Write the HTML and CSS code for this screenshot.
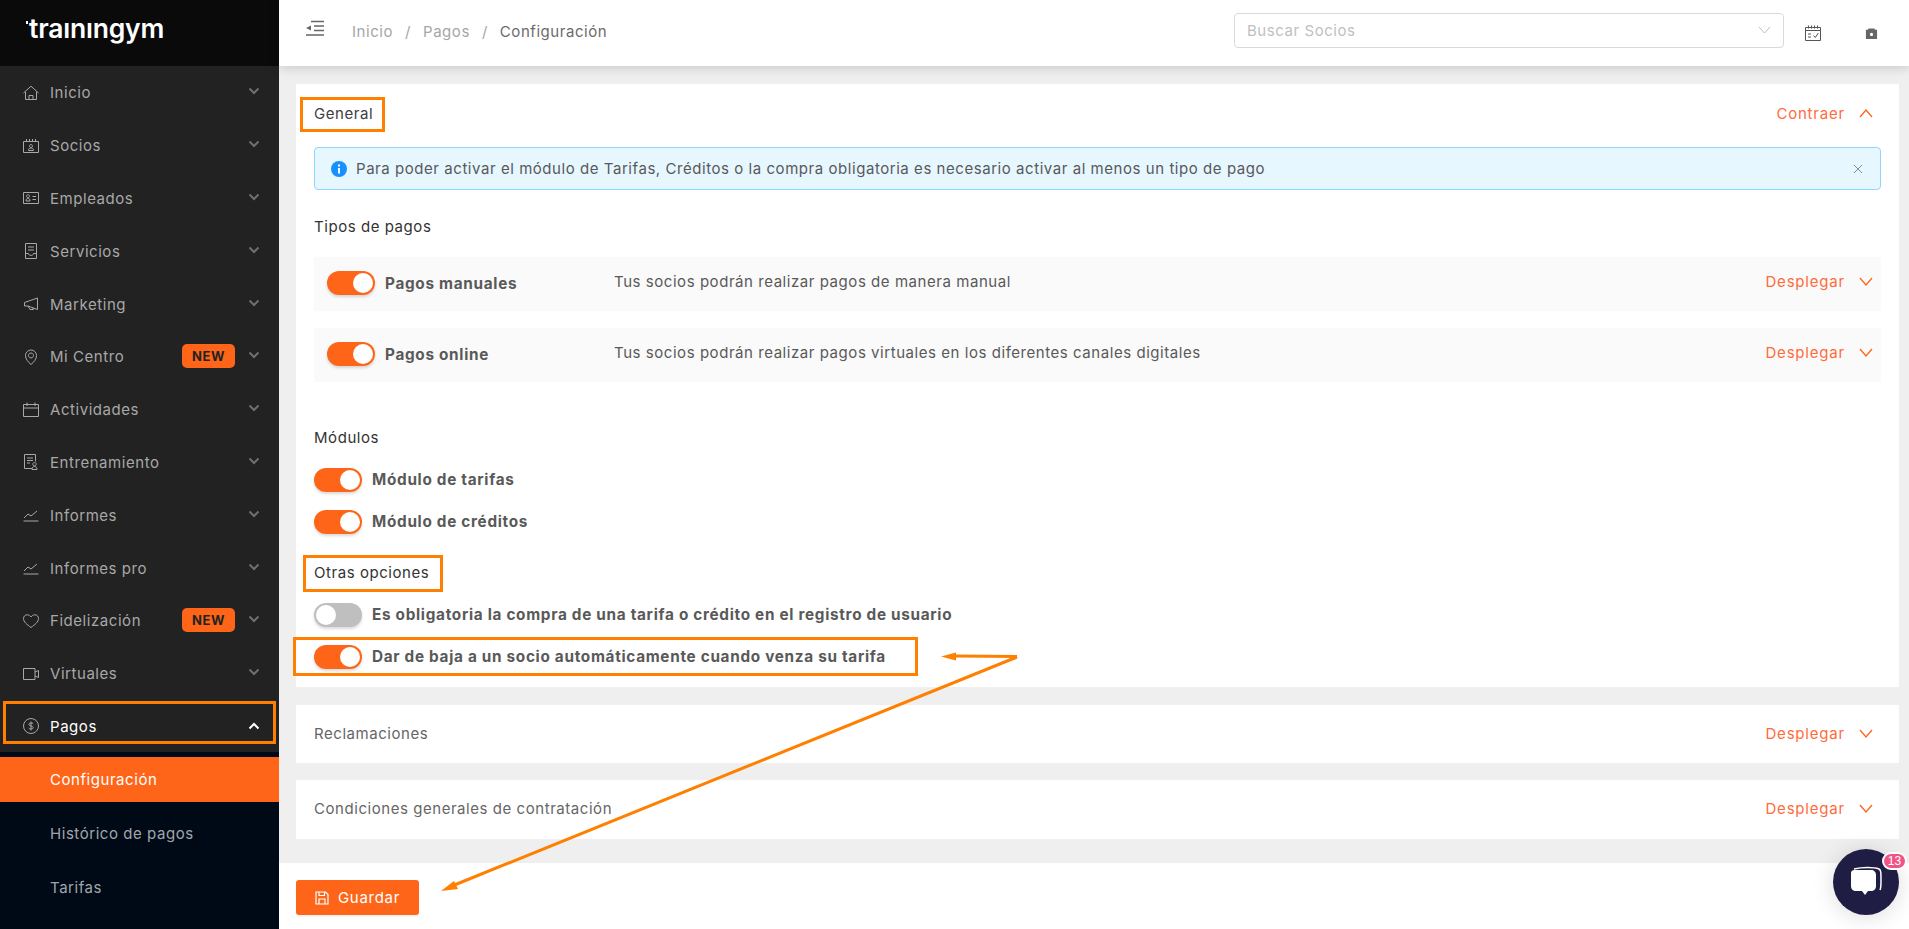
FILE: index.html
```html
<!DOCTYPE html>
<html lang="es">
<head>
<meta charset="utf-8">
<title>Configuración de pagos</title>
<link rel="stylesheet" href="styles.css">
</head>
<body>
<div class="app">
  <aside class="sidebar">
    <div class="logo"><span class="logo-dot"></span><span class="logo-text">traınıngym</span></div>
    <nav class="nav">
      <a class="nav-item"><svg class="ico" viewBox="0 0 16 16"><path d="M.5 8 8 1.2 15.5 8M2.5 7v7.5h11V7M6 14.500V10.500h4v4"/></svg><span class="nav-label">Inicio</span><svg class="chev" viewBox="0 0 12 8"><path d="M1.500 1.500 6 6l4.500-4.500"/></svg></a>
      <a class="nav-item"><svg class="ico" viewBox="0 0 16 16"><path d="M.5 3.500h15v11H.5zM3.500 1v3M6.500 1v3M9.500 1v3M12.500 1v3M5.500 12.500c0-2 1-2.500 2.500-2.500s2.500.5 2.500 2.500zM8 6.500a1.500 1.500 0 1 0 .01 0"/></svg><span class="nav-label">Socios</span><svg class="chev" viewBox="0 0 12 8"><path d="M1.500 1.500 6 6l4.500-4.500"/></svg></a>
      <a class="nav-item"><svg class="ico" viewBox="0 0 16 16"><path d="M.5 2.500h15v11H.5zM3 11c0-2 .8-2.500 2-2.500S7 9 7 11zM5 4.700a1.500 1.500 0 1 0 .01 0M9.500 6.500h3.500M9.500 9.500h3.500"/></svg><span class="nav-label">Empleados</span><svg class="chev" viewBox="0 0 12 8"><path d="M1.500 1.500 6 6l4.500-4.500"/></svg></a>
      <a class="nav-item"><svg class="ico" viewBox="0 0 16 16"><path d="M2.500.5h11v15h-11zM5 4h6M5 7h6M2.500 10.500h3c0 2.500 5 2.500 5 0h3"/></svg><span class="nav-label">Servicios</span><svg class="chev" viewBox="0 0 12 8"><path d="M1.500 1.500 6 6l4.500-4.500"/></svg></a>
      <a class="nav-item"><svg class="ico" viewBox="0 0 16 16"><path d="M14.500 2v11.500L5 10H1.500V6.500zM5 10l2 3.500h3.500L9.500 11.500"/></svg><span class="nav-label">Marketing</span><svg class="chev" viewBox="0 0 12 8"><path d="M1.500 1.500 6 6l4.500-4.500"/></svg></a>
      <a class="nav-item"><svg class="ico" viewBox="0 0 16 16"><path d="M8 15.500C5 13 2.500 10 2.500 6.500a5.500 5.500 0 0 1 11 0C13.500 10 11 13 8 15.500zM8 4a2.500 2.500 0 1 0 .01 0"/></svg><span class="nav-label">Mi Centro</span><span class="badge">NEW</span><svg class="chev" viewBox="0 0 12 8"><path d="M1.500 1.500 6 6l4.500-4.500"/></svg></a>
      <a class="nav-item"><svg class="ico" viewBox="0 0 16 16"><path d="M.5 2.500h15v12H.5zM.5 6h15M4 .5v3.500M12 .5v3.500"/></svg><span class="nav-label">Actividades</span><svg class="chev" viewBox="0 0 12 8"><path d="M1.500 1.500 6 6l4.500-4.500"/></svg></a>
      <a class="nav-item"><svg class="ico" viewBox="0 0 16 16"><path d="M9 14.500H1.500V.5h11v7M4 4h6M4 6.500h6M4 9h3M9 15.500c0-2 1-3 2.500-3s2.500 1 2.500 3zM11.500 8.500a1.700 1.700 0 1 0 .01 0"/></svg><span class="nav-label">Entrenamiento</span><svg class="chev" viewBox="0 0 12 8"><path d="M1.500 1.500 6 6l4.500-4.500"/></svg></a>
      <a class="nav-item"><svg class="ico" viewBox="0 0 16 16"><path d="M.5 14h15M1 11l4-4 3 2 6-5"/></svg><span class="nav-label">Informes</span><svg class="chev" viewBox="0 0 12 8"><path d="M1.500 1.500 6 6l4.500-4.500"/></svg></a>
      <a class="nav-item"><svg class="ico" viewBox="0 0 16 16"><path d="M.5 14h15M1 11l4-4 3 2 6-5"/></svg><span class="nav-label">Informes pro</span><svg class="chev" viewBox="0 0 12 8"><path d="M1.500 1.500 6 6l4.500-4.500"/></svg></a>
      <a class="nav-item"><svg class="ico" viewBox="0 0 16 16"><path d="M8 14.500C4 11.500.5 9 .5 5.500 .5 3.300 2.200 1.800 4.200 1.800 5.800 1.800 7.200 2.700 8 4c.8-1.300 2.200-2.200 3.800-2.200 2 0 3.700 1.500 3.700 3.700C15.500 9 12 11.500 8 14.500z"/></svg><span class="nav-label">Fidelización</span><span class="badge">NEW</span><svg class="chev" viewBox="0 0 12 8"><path d="M1.500 1.500 6 6l4.500-4.500"/></svg></a>
      <a class="nav-item"><svg class="ico" viewBox="0 0 16 16"><path d="M.5 2.500h11.500v11H.5zM12 6l3.500-1.500v7L12 10"/></svg><span class="nav-label">Virtuales</span><svg class="chev" viewBox="0 0 12 8"><path d="M1.500 1.500 6 6l4.500-4.500"/></svg></a>
      <a class="nav-item active"><svg class="ico" viewBox="0 0 16 16"><circle cx="8" cy="8" r="7.500"/><path d="M10.300 5.800C9.700 4.600 6 4.500 5.800 6.300 5.600 8.200 10.400 7.700 10.300 9.700 10.100 11.400 6.400 11.400 5.700 10M8 3.500v9"/></svg><span class="nav-label">Pagos</span><svg class="chev up" viewBox="0 0 12 8"><path d="M1.500 6.500 6 2l4.500 4.500"/></svg></a>
    </nav>
    <div class="subnav">
      <a class="sub-item current">Configuración</a>
      <a class="sub-item">Histórico de pagos</a>
      <a class="sub-item">Tarifas</a>
    </div>
  </aside>

  <main class="main">
    <header class="topbar">
      <svg class="menu-ico" viewBox="0 0 18 16"><path d="M5 1.500h13M8 6h10M8 10.500h10M0 15h18"/><path class="fill" d="M5 5.500v5L0 8z"/></svg>
      <ol class="crumbs">
        <li>Inicio</li><li class="sep">/</li><li>Pagos</li><li class="sep">/</li><li class="here">Configuración</li>
      </ol>
      <div class="search"><span>Buscar Socios</span><svg class="search-chev" viewBox="0 0 13 8"><path d="M1 1l5.500 6L12 1"/></svg></div>
      <svg class="top-ico" viewBox="0 0 16 16"><path d="M.5 2.500h15v13H.5zM.5 5.500h15M3.500.5v3M6.500.5v3M9.500.5v3M12.500.5v3M3 9h3M3 12h3M8.500 10.500l1.800 2 3-4.500"/></svg>
      <svg class="top-ico cam" viewBox="0 0 14 14"><path class="fill" d="M4 1.500h6l1 1.500h2v10H1V3h2z"/><circle class="hole" cx="7" cy="8" r="2.500"/></svg>
    </header>

    <div class="content">
      <section class="card">
        <div class="card-head">
          <span class="card-title">General</span>
          <span class="fold">Contraer<svg class="fold-ico" viewBox="0 0 14 9"><path d="M1 8 7 1l6 7"/></svg></span>
        </div>
        <div class="alert">
          <svg class="info" viewBox="0 0 16 16"><circle cx="8" cy="8" r="8"/><rect x="7" y="7" width="2" height="5.500"/><rect x="7" y="3.500" width="2" height="2"/></svg>
          <span class="alert-text">Para poder activar el módulo de Tarifas, Créditos o la compra obligatoria es necesario activar al menos un tipo de pago</span>
          <svg class="close" viewBox="0 0 10 10"><path d="M1 1l8 8M9 1 1 9"/></svg>
        </div>
        <h3 class="section first">Tipos de pagos</h3>
        <div class="pay-row">
          <span class="toggle on"></span>
          <strong class="pay-name">Pagos manuales</strong>
          <span class="pay-desc">Tus socios podrán realizar pagos de manera manual</span>
          <span class="fold">Desplegar<svg class="fold-ico" viewBox="0 0 14 9"><path d="M1 1l6 7 6-7"/></svg></span>
        </div>
        <div class="pay-row second">
          <span class="toggle on"></span>
          <strong class="pay-name">Pagos online</strong>
          <span class="pay-desc">Tus socios podrán realizar pagos virtuales en los diferentes canales digitales</span>
          <span class="fold">Desplegar<svg class="fold-ico" viewBox="0 0 14 9"><path d="M1 1l6 7 6-7"/></svg></span>
        </div>
        <h3 class="section modules">Módulos</h3>
        <div class="opt"><span class="toggle on"></span><strong class="opt-label">Módulo de tarifas</strong></div>
        <div class="opt"><span class="toggle on"></span><strong class="opt-label">Módulo de créditos</strong></div>
        <h3 class="section others">Otras opciones</h3>
        <div class="opt"><span class="toggle"></span><strong class="opt-label">Es obligatoria la compra de una tarifa o crédito en el registro de usuario</strong></div>
        <div class="opt"><span class="toggle on"></span><strong class="opt-label">Dar de baja a un socio automáticamente cuando venza su tarifa</strong></div>
      </section>
      <section class="card closed h58">
        <span class="card-title muted">Reclamaciones</span>
        <span class="fold">Desplegar<svg class="fold-ico" viewBox="0 0 14 9"><path d="M1 1l6 7 6-7"/></svg></span>
      </section>
      <section class="card closed h59">
        <span class="card-title muted">Condiciones generales de contratación</span>
        <span class="fold">Desplegar<svg class="fold-ico" viewBox="0 0 14 9"><path d="M1 1l6 7 6-7"/></svg></span>
      </section>
    </div>

    <footer class="footer">
      <button class="save"><svg class="save-ico" viewBox="0 0 14 14"><path d="M1 1h9.500L13 3.500V13H1zM4 1v3.500h5.500V1M4 13V8h6v5"/></svg>Guardar</button>
    </footer>
  </main>
</div>

<svg class="marks" viewBox="0 0 1909 929">
  <rect x="301.500" y="98.500" width="82" height="32"/>
  <rect x="304.500" y="556.500" width="137" height="34"/>
  <rect x="294.500" y="638.500" width="622" height="36"/>
  <rect x="4.500" y="702.500" width="270" height="40"/>
  <path d="M1017 656.500 955 656"/>
  <path d="M1017 657 452 886"/>
  <path class="head" d="M941 656.500l15-4v8z"/>
  <path class="head" d="M441 891l13-10 4 8z"/>
</svg>

<div class="chat">
  <svg class="chat-ico" viewBox="0 0 36 32"><path class="back" d="M6 3c8-2 20-2 25 0 2 1 2 3 2 12 0 4 0 7-1 9"/><path class="bubble" d="M3 8c0-3 1-4 4-4h16c3 0 5 2 5 5v11c0 3-2 5-5 5h-3l-3 4-3-4H8c-3 0-5-2-5-5z"/></svg>
  <span class="chat-badge">13</span>
</div>
</body>
</html>
```

FILE: styles.css
```css
* { box-sizing: border-box; }
html, body { margin: 0; padding: 0; height: 100%; overflow: hidden; }
body { font-family: Inter, "Liberation Sans", sans-serif; font-size: 15px; letter-spacing: .55px; color: #595959; background: #fff; }
h3, ol { margin: 0; padding: 0; font-size: inherit; font-weight: 400; }
li { list-style: none; }

.app { display: flex; height: 929px; }

/* sidebar */
.sidebar { width: 279px; flex: none; display: flex; flex-direction: column; background: #000a16; }
.logo { height: 66px; flex: none; background: #0a0a0a; display: flex; align-items: flex-start; padding: 13px 0 0 26px; color: #fff; }
.logo-dot { width: 2px; height: 3px; margin-top: 8px; background: #fff; }
.logo-text { font-size: 26.500px; line-height: 30px; font-weight: 600; letter-spacing: -.2px; margin-left: 1px; }
.nav { background: #222; flex: none; }
.nav-item { height: 52.8px; display: flex; align-items: center; padding: 1px 19px 0 23px; color: #a8a8a8; }
.nav-label { flex: 1; margin-left: 11px; }
.nav-item.active .nav-label { color: #fff; }
.ico { width: 16px; height: 16px; flex: none; fill: none; stroke: #a8a8a8; stroke-width: 1; }
.chev { width: 12px; height: 8px; flex: none; margin-top: -3px; fill: none; stroke: #6f6f6f; stroke-width: 2; }
.chev.up { stroke: #fff; margin-top: 0; }
.badge { width: 53px; height: 24px; border-radius: 5px; background: #ff6518; color: #222; font-size: 13px; font-weight: 700; letter-spacing: .6px; display: flex; align-items: center; justify-content: center; margin: -1px 13px 0 0; }
.subnav { flex: 1; padding-top: 4.600px; }
.sub-item { display: flex; align-items: center; padding-left: 50px; height: 54px; color: #a0a6ac; position: relative; top: 1px; }
.sub-item.current { height: 45px; margin-bottom: 4px; background: #ff6518; color: #fff; top: 0; }

/* main column */
.main { flex: 1; min-width: 0; display: flex; flex-direction: column; }
.topbar { height: 66px; flex: none; background: #fff; box-shadow: 0 2px 10px rgba(0,0,0,.16); display: flex; align-items: center; padding-left: 27px; position: relative; z-index: 1; }
.menu-ico { width: 18px; height: 16px; margin-top: -10px; flex: none; fill: none; stroke: #666; stroke-width: 1.500; }
.menu-ico .fill { fill: #666; stroke: none; }
.crumbs { display: flex; margin: -3px 0 0 28px; color: #a6a6a6; flex: 1; }
.crumbs .sep { margin: 0 12px; }
.crumbs .here { color: #6b6b6b; }
.search { width: 550px; height: 35px; flex: none; margin-top: -6px; border: 1px solid #d9d9d9; border-radius: 4px; display: flex; align-items: center; justify-content: space-between; padding: 0 12px; color: #bfbfbf; }
.search-chev { width: 13px; height: 8px; fill: none; stroke: #bfbfbf; stroke-width: 1; }
.top-ico { width: 16px; height: 16px; flex: none; margin-left: 21px; fill: none; stroke: #555; stroke-width: 1; }
.top-ico.cam { width: 13px; height: 13px; margin-left: 44px; margin-right: 31px; }
.cam .fill { fill: #666; stroke: none; }
.cam .hole { fill: #fff; stroke: #666; stroke-width: 1.500; }

.content { flex: 1; background: #efefef; padding: 18px 10px 24px 17px; display: flex; flex-direction: column; }
.card { background: #fff; padding: 0 18px 18px; flex: none; }
.card-head { height: 60px; margin-bottom: 3px; display: flex; align-items: center; justify-content: space-between; }
.card-title { color: #404040; position: relative; top: -1px; }
.card-title.muted { color: #666; }
.fold { display: flex; align-items: center; color: #ff6b3d; letter-spacing: .8px; padding-right: 8px; position: relative; top: -1px; }
.fold-ico { width: 14px; height: 9px; margin-left: 14px; fill: none; stroke: #ff6518; stroke-width: 1.300; }

.card.closed { padding-bottom: 0; display: flex; align-items: center; justify-content: space-between; margin-top: 17px; }
.card.h58 { height: 58px; margin-top: 18px; }
.card.h59 { height: 59px; }

.alert { height: 43px; border: 1px solid #91d5ff; border-radius: 4px; background: #e6f7ff; display: flex; align-items: center; padding: 0 17px 0 16px; }
.info { width: 16px; height: 16px; flex: none; fill: #1890ff; }
.info rect { fill: #fff; }
.alert-text { flex: 1; margin-left: 9px; color: #595959; }
.close { width: 10px; height: 10px; flex: none; fill: none; stroke: #8c8c8c; stroke-width: 1; }

.section { height: 20px; line-height: 20px; color: #333; margin-bottom: 20px; }
.section.first { margin-top: 27px; }
.section.modules { margin-top: 46px; }
.section.others { margin-top: 29px; }

.pay-row { height: 54px; background: #fafafa; display: flex; align-items: center; padding: 0 0 2px 13px; }
.pay-row.second { margin-top: 17px; }
.pay-name { width: 229px; flex: none; margin-left: 10px; font-size: 15.300px; font-weight: 700; letter-spacing: .7px; color: #595959; }
.pay-desc { flex: 1; margin-top: -3px; }
.pay-row .fold { margin-top: -1px; }

.toggle { width: 48px; height: 24px; flex: none; border-radius: 12px; background: #bfbfbf; display: flex; align-items: center; padding: 0 2px; box-shadow: 0 2px 3px rgba(0,0,0,.15); }
.toggle::after { content: ""; width: 20px; height: 20px; border-radius: 50%; background: #fff; }
.toggle.on { background: #ff6518; justify-content: flex-end; }

.opt { height: 24px; display: flex; align-items: center; }
.opt + .opt { margin-top: 18px; }
.opt-label { margin: -2px 0 0 10px; font-size: 15.300px; font-weight: 700; letter-spacing: .7px; }

.footer { height: 66px; flex: none; background: #fff; padding: 17px 0 0 17px; }
.save { width: 123px; height: 35px; display: flex; align-items: center; justify-content: center; border: 0; border-radius: 3px; background: #ff6518; color: #fff; font-family: inherit; font-size: 15px; letter-spacing: .7px; padding: 0; box-shadow: 0 2px 2px rgba(0,0,0,.06); }
.save-ico { width: 14px; height: 14px; margin-right: 9px; fill: none; stroke: #fff; stroke-width: 1.200; }

/* annotations painted over the screenshot */
.marks { position: absolute; left: 0; top: 0; width: 1909px; height: 929px; z-index: 5; pointer-events: none; fill: none; stroke: #ff8000; stroke-width: 3; }
.marks .head { fill: #ff8000; stroke: none; }

/* chat launcher */
.chat { position: absolute; left: 1833px; top: 849px; width: 66px; height: 66px; border-radius: 50%; background: #201d44; box-shadow: 0 2px 22px rgba(0,0,0,.14); z-index: 6; display: flex; align-items: center; justify-content: center; }
.chat-ico { width: 36px; height: 32px; }
.chat-ico .back { fill: none; stroke: #fff; stroke-width: 1.500; }
.chat-ico .bubble { fill: #fff; }
.chat-badge { position: absolute; left: 49px; top: 3px; width: 25px; height: 18px; border-radius: 9px; background: #ee5586; border: 2px solid #fff; color: #fff; font-family: "Liberation Sans", sans-serif; font-size: 12px; letter-spacing: 0; line-height: 14px; text-align: center; }
```
